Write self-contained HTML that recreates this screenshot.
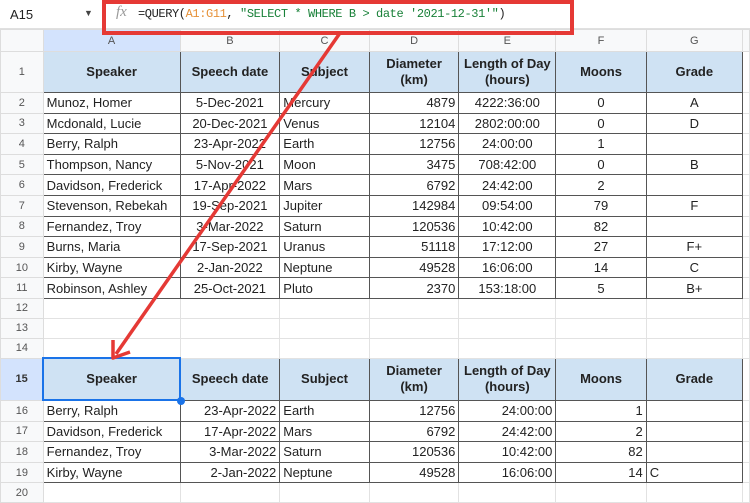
<!DOCTYPE html>
<html><head><meta charset="utf-8"><style>
*{box-sizing:border-box;margin:0;padding:0}
body{width:750px;height:500px;overflow:hidden;background:#fff;font-family:"Liberation Sans",Arial,sans-serif;position:relative}
.bar{position:absolute;left:0;top:0;width:750px;height:29px;background:#fff;border-bottom:1px solid #e0e0e0}
.nb{position:absolute;left:10px;top:7px;font-size:13px;color:#222}
.dd{position:absolute;left:84px;top:8px;font-size:9px;color:#444}
.fx{position:absolute;left:116px;top:4px;font-size:15px;color:#999;font-style:italic;font-family:"Liberation Serif",serif}
.fm{position:absolute;left:138px;top:7px;font-size:12px;color:#222;font-family:"Liberation Mono",monospace;letter-spacing:-0.4px}
.o{color:#e69138}.g{color:#188038}
table{position:absolute;left:0;top:29px;border-collapse:collapse;table-layout:fixed}
td{border:1px solid #e2e2e2;font-size:13px;color:#222;padding:0 3px;white-space:nowrap;overflow:hidden;height:20.6px}
td.rh{background:#f8f9fa;color:#555;font-size:11px;text-align:center;border-color:#ddd}
tr.ch td{background:#f8f9fa;color:#555;font-size:11px;text-align:center;height:22px;border-color:#ddd}
tr.ch td.sel{background:#d3e3fd}
td.h{background:#cfe2f3;font-weight:bold;text-align:center;border:1px solid #555;line-height:16px}
td.d{border:1px solid #555}
.r{text-align:right}.c{text-align:center}
tr.h1 td{height:41px}
tr.e td{height:20px}
tr.h15 td{height:42px}
td.rsel{background:#d3e3fd;font-weight:bold;color:#333}
</style></head><body>
<div class="bar"><span class="nb">A15</span><span class="dd">▼</span><span class="fx">fx</span><span class="fm">=QUERY(<span class="o">A1:G11</span>, <span class="g">"SELECT * WHERE B &gt; date '2021-12-31'"</span>)</span></div>
<table>
<colgroup><col style="width:43px"><col style="width:137px"><col style="width:100px"><col style="width:90px"><col style="width:90px"><col style="width:97px"><col style="width:91px"><col style="width:97px"><col style="width:5px"></colgroup>
<tr class="ch"><td></td><td class="sel">A</td><td>B</td><td>C</td><td>D</td><td>E</td><td>F</td><td>G</td><td></td></tr>
<tr class="h1"><td class="rh">1</td><td class="h">Speaker</td><td class="h">Speech date</td><td class="h">Subject</td><td class="h">Diameter<br>(km)</td><td class="h">Length of Day<br>(hours)</td><td class="h">Moons</td><td class="h">Grade</td><td></td></tr>
<tr><td class="rh">2</td><td class="d">Munoz, Homer</td><td class="d c">5-Dec-2021</td><td class="d">Mercury</td><td class="d r">4879</td><td class="d c">4222:36:00</td><td class="d c">0</td><td class="d c">A</td><td></td></tr>
<tr><td class="rh">3</td><td class="d">Mcdonald, Lucie</td><td class="d c">20-Dec-2021</td><td class="d">Venus</td><td class="d r">12104</td><td class="d c">2802:00:00</td><td class="d c">0</td><td class="d c">D</td><td></td></tr>
<tr><td class="rh">4</td><td class="d">Berry, Ralph</td><td class="d c">23-Apr-2022</td><td class="d">Earth</td><td class="d r">12756</td><td class="d c">24:00:00</td><td class="d c">1</td><td class="d c"></td><td></td></tr>
<tr><td class="rh">5</td><td class="d">Thompson, Nancy</td><td class="d c">5-Nov-2021</td><td class="d">Moon</td><td class="d r">3475</td><td class="d c">708:42:00</td><td class="d c">0</td><td class="d c">B</td><td></td></tr>
<tr><td class="rh">6</td><td class="d">Davidson, Frederick</td><td class="d c">17-Apr-2022</td><td class="d">Mars</td><td class="d r">6792</td><td class="d c">24:42:00</td><td class="d c">2</td><td class="d c"></td><td></td></tr>
<tr><td class="rh">7</td><td class="d">Stevenson, Rebekah</td><td class="d c">19-Sep-2021</td><td class="d">Jupiter</td><td class="d r">142984</td><td class="d c">09:54:00</td><td class="d c">79</td><td class="d c">F</td><td></td></tr>
<tr><td class="rh">8</td><td class="d">Fernandez, Troy</td><td class="d c">3-Mar-2022</td><td class="d">Saturn</td><td class="d r">120536</td><td class="d c">10:42:00</td><td class="d c">82</td><td class="d c"></td><td></td></tr>
<tr><td class="rh">9</td><td class="d">Burns, Maria</td><td class="d c">17-Sep-2021</td><td class="d">Uranus</td><td class="d r">51118</td><td class="d c">17:12:00</td><td class="d c">27</td><td class="d c">F+</td><td></td></tr>
<tr><td class="rh">10</td><td class="d">Kirby, Wayne</td><td class="d c">2-Jan-2022</td><td class="d">Neptune</td><td class="d r">49528</td><td class="d c">16:06:00</td><td class="d c">14</td><td class="d c">C</td><td></td></tr>
<tr><td class="rh">11</td><td class="d">Robinson, Ashley</td><td class="d c">25-Oct-2021</td><td class="d">Pluto</td><td class="d r">2370</td><td class="d c">153:18:00</td><td class="d c">5</td><td class="d c">B+</td><td></td></tr>
<tr class="e"><td class="rh">12</td><td></td><td></td><td></td><td></td><td></td><td></td><td></td><td></td></tr>
<tr class="e"><td class="rh">13</td><td></td><td></td><td></td><td></td><td></td><td></td><td></td><td></td></tr>
<tr class="e"><td class="rh">14</td><td></td><td></td><td></td><td></td><td></td><td></td><td></td><td></td></tr>
<tr class="h15"><td class="rh rsel">15</td><td class="h" style="border:2px solid #1a73e8">Speaker</td><td class="h">Speech date</td><td class="h">Subject</td><td class="h">Diameter<br>(km)</td><td class="h">Length of Day<br>(hours)</td><td class="h">Moons</td><td class="h">Grade</td><td></td></tr>
<tr><td class="rh">16</td><td class="d">Berry, Ralph</td><td class="d r">23-Apr-2022</td><td class="d">Earth</td><td class="d r">12756</td><td class="d r">24:00:00</td><td class="d r">1</td><td class="d"></td><td></td></tr>
<tr><td class="rh">17</td><td class="d">Davidson, Frederick</td><td class="d r">17-Apr-2022</td><td class="d">Mars</td><td class="d r">6792</td><td class="d r">24:42:00</td><td class="d r">2</td><td class="d"></td><td></td></tr>
<tr><td class="rh">18</td><td class="d">Fernandez, Troy</td><td class="d r">3-Mar-2022</td><td class="d">Saturn</td><td class="d r">120536</td><td class="d r">10:42:00</td><td class="d r">82</td><td class="d"></td><td></td></tr>
<tr><td class="rh">19</td><td class="d">Kirby, Wayne</td><td class="d r">2-Jan-2022</td><td class="d">Neptune</td><td class="d r">49528</td><td class="d r">16:06:00</td><td class="d r">14</td><td class="d">C</td><td></td></tr>
<tr class="e"><td class="rh">20</td><td></td><td></td><td></td><td></td><td></td><td></td><td></td><td></td></tr>
</table>
<div style="position:absolute;left:177px;top:397px;width:8px;height:8px;border-radius:50%;background:#1a73e8"></div>
<svg width="750" height="500" style="position:absolute;left:0;top:0">
<rect x="104" y="2" width="468" height="31" fill="none" stroke="#e53935" stroke-width="4"/>
<line x1="340" y1="33" x2="116" y2="354" stroke="#e53935" stroke-width="3.5"/>
<polyline points="113,340 113,358 130,352" fill="none" stroke="#e53935" stroke-width="3.5" stroke-linejoin="round"/>
</svg>
</body></html>
